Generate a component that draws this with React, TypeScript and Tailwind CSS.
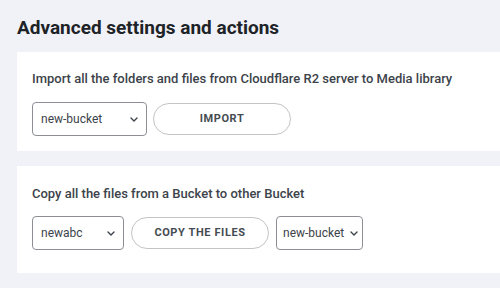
import React from "react";

function Chevron() {
  return (
    <svg width="8" height="5" viewBox="0 0 8 5" fill="none" className="shrink-0">
      <path d="M1 1l3 3 3-3" stroke="#3c434a" strokeWidth="1.4" strokeLinecap="round" strokeLinejoin="round" />
    </svg>
  );
}

function Select({ label, w, tight }: { label: string; w: string; tight?: boolean }) {
  return (
    <div
      className={`flex h-[34px] ${w} items-center ${tight ? "justify-start gap-[6px] pl-[6px]" : "justify-between pl-[8px]"} whitespace-nowrap rounded-[4px] border border-[#8c8f94] bg-white pr-[8px] text-[12px] text-[#3c434a]`}
    >
      <span>{label}</span>
      <Chevron />
    </div>
  );
}

function Btn({ label, w }: { label: string; w: string }) {
  return (
    <div className={`flex h-[32px] ${w} items-center justify-center whitespace-nowrap rounded-full border border-[#c3c4c7] bg-white text-[11px] font-bold tracking-[0.6px] text-[#454b52]`}>
      {label}
    </div>
  );
}

export default function App() {
  return (
    <div className="h-[288px] w-[500px] overflow-hidden bg-[#f0f2f7] pl-[17px]" style={{ fontFamily: "Roboto, 'Liberation Sans', sans-serif" }}>
      <h1 className="pt-[16px] text-[19px] font-bold leading-[24px] text-[#1d2327]">Advanced settings and actions</h1>
      <div className="mt-[12px] flex w-[520px] flex-col gap-[15px]">
        <div className="h-[99px] bg-white pl-[15px] pt-[19px]">
          <div className="text-[13px] font-medium leading-[16px] text-[#3c434a]">
            Import all the folders and files from Cloudflare R2 server to Media library
          </div>
          <div className="mt-[15px] flex items-center gap-[6px]">
            <Select label="new-bucket" w="w-[115px]" />
            <Btn label="IMPORT" w="w-[138px]" />
          </div>
        </div>
        <div className="h-[107px] bg-white pl-[15px] pt-[20px]">
          <div className="text-[13px] font-medium leading-[16px] text-[#3c434a]">
            Copy all the files from a Bucket to other Bucket
          </div>
          <div className="mt-[14px] flex items-center gap-[7px]">
            <Select label="newabc" w="w-[92px]" />
            <Btn label="COPY THE FILES" w="w-[138px]" />
            <Select label="new-bucket" w="w-[87px]" tight />
          </div>
        </div>
      </div>
    </div>
  );
}
